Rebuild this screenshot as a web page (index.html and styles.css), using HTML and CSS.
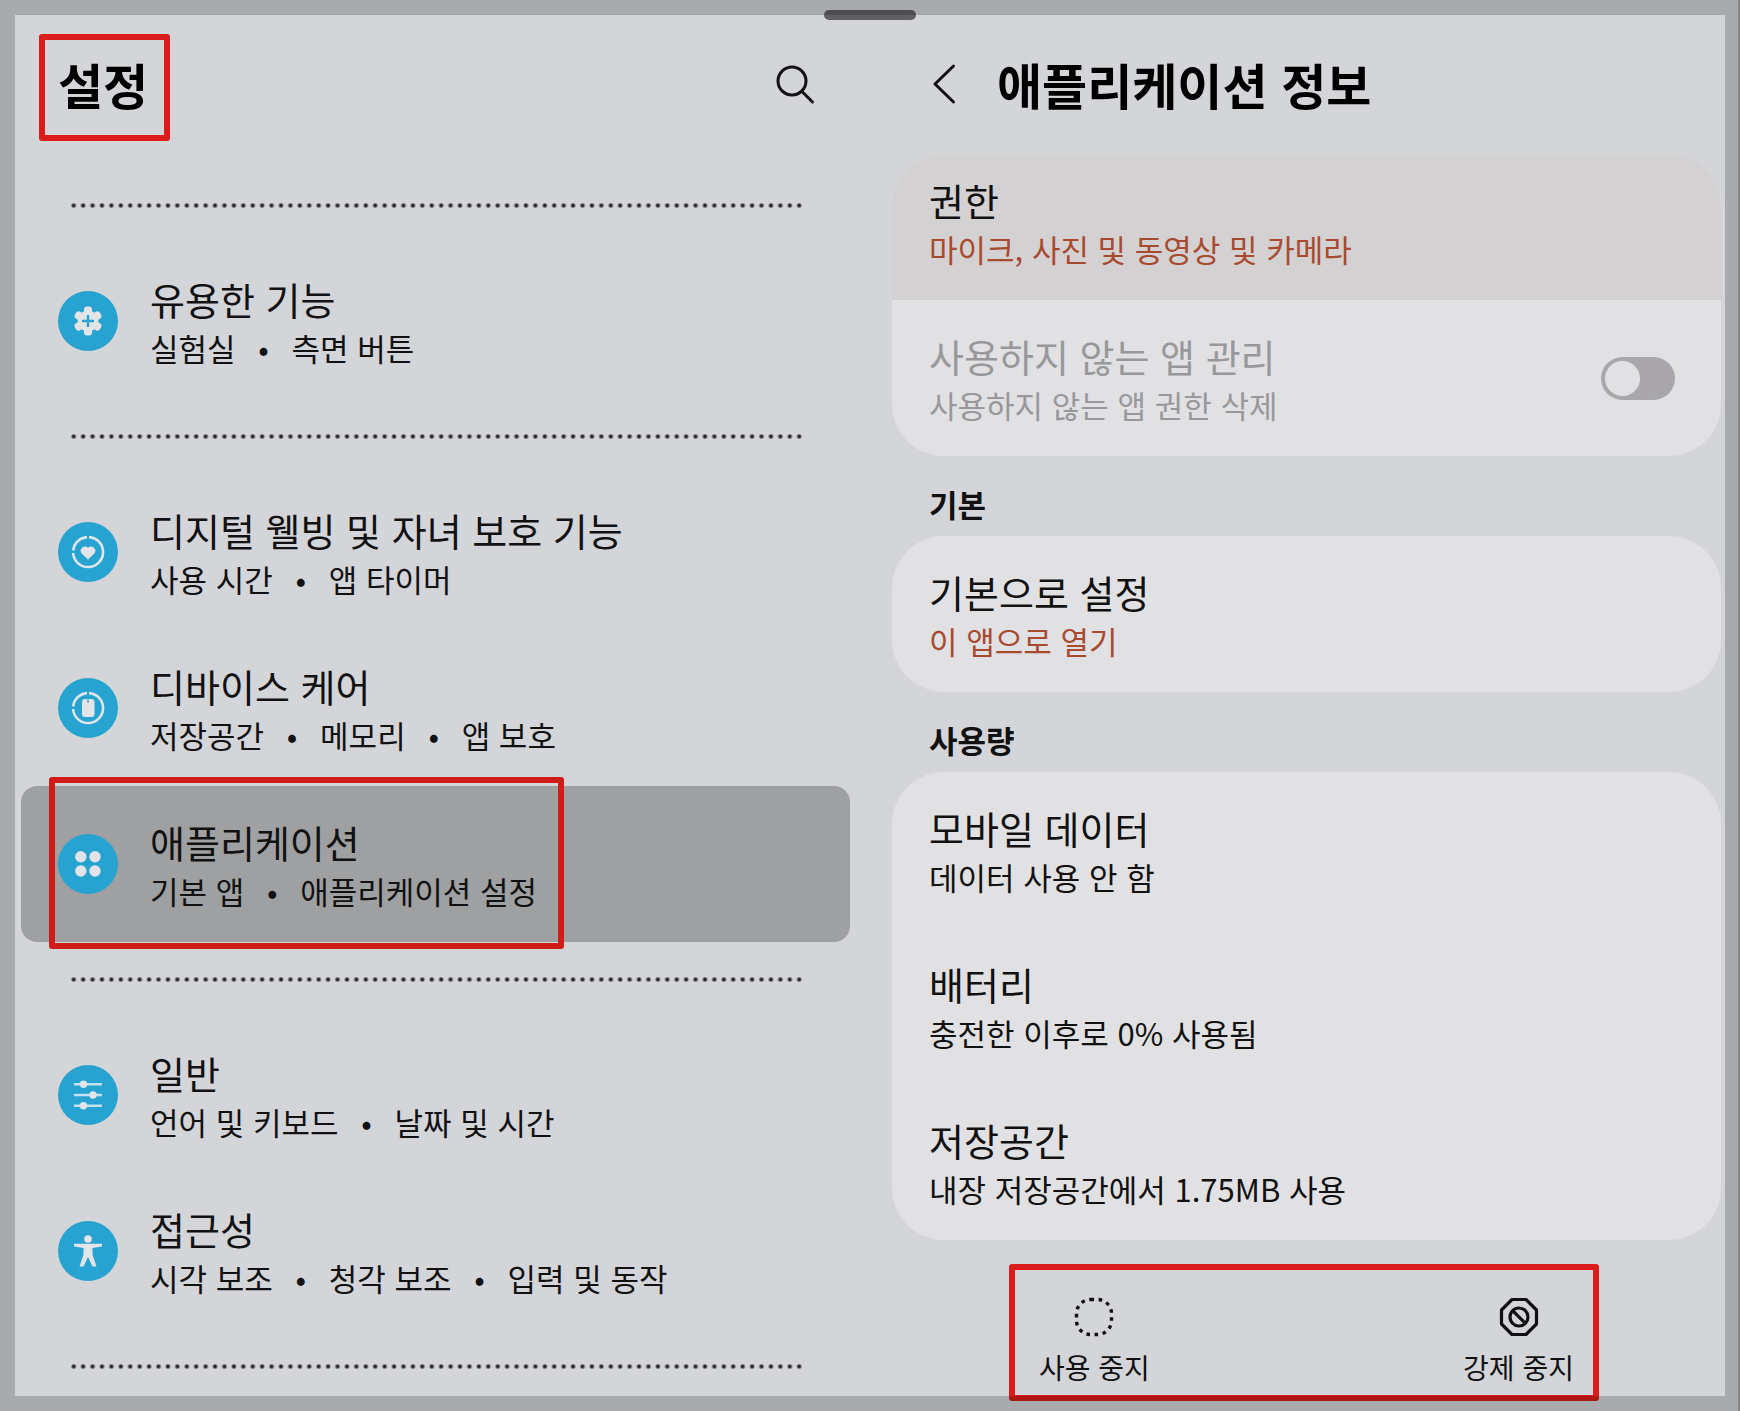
FILE: index.html
```html
<!DOCTYPE html>
<html lang="ko">
<head>
<meta charset="utf-8">
<meta name="viewport" content="width=device-width, initial-scale=1">
<title>설정</title>
<link rel="stylesheet" href="styles.css">
</head>
<body>
<div class="screen">
  <span class="handle"></span>

  <nav class="pane pane-list" aria-label="설정">
    <header class="bar">
      <h1 class="bar-title marked marked-title">설정</h1>
      <button class="icon-button" type="button" aria-label="검색">
        <svg width="40" height="40" viewBox="0 0 40 40" fill="none" stroke="#111" stroke-width="3" stroke-linecap="round"><circle cx="17" cy="17" r="14"/><path d="M27 27.500L37.500 38"/></svg>
      </button>
    </header>

    <hr class="dots">

    <a class="item" href="#features">
      <svg class="badge" viewBox="0 0 60 60"><circle cx="30" cy="30" r="30" fill="#26a3d0"/><g fill="#e3e4e7"><circle cx="30" cy="30" r="10.500"/><rect x="26" y="15.500" width="8" height="29" rx="3"/><rect x="26" y="15.500" width="8" height="29" rx="3" transform="rotate(60 30 30)"/><rect x="26" y="15.500" width="8" height="29" rx="3" transform="rotate(120 30 30)"/></g><path d="M30 24v12M24 30h12" stroke="#26a3d0" stroke-width="2.400"/></svg>
      <span class="item-text">
        <span class="label">유용한 기능</span>
        <span class="note">실험실<span class="sep">•</span>측면 버튼</span>
      </span>
    </a>

    <hr class="dots">

    <a class="item" href="#wellbeing">
      <svg class="badge" viewBox="0 0 60 60"><circle cx="30" cy="30" r="30" fill="#26a3d0"/><path d="M31 15.100A15 15 0 1 1 15.100 31M15.200 28.500A15 15 0 0 1 29 15.100" fill="none" stroke="#dfe6ea" stroke-width="2.600"/><path d="M30 37.500l-6.600-6.300a4.300 4.300 0 0 1 6.600-5.400a4.300 4.300 0 0 1 6.600 5.400z" fill="#e3e4e7"/></svg>
      <span class="item-text">
        <span class="label">디지털 웰빙 및 자녀 보호 기능</span>
        <span class="note">사용 시간<span class="sep">•</span>앱 타이머</span>
      </span>
    </a>

    <a class="item" href="#care">
      <svg class="badge" viewBox="0 0 60 60"><circle cx="30" cy="30" r="30" fill="#26a3d0"/><path d="M31 15.100A15 15 0 1 1 15.100 31M15.200 28.500A15 15 0 0 1 29 15.100" fill="none" stroke="#dfe6ea" stroke-width="2.600"/><rect x="24" y="21" width="12.500" height="18" rx="3" fill="#e3e4e7"/><path d="M30 21.500v3" stroke="#26a3d0" stroke-width="1.500"/></svg>
      <span class="item-text">
        <span class="label">디바이스 케어</span>
        <span class="note">저장공간<span class="sep">•</span>메모리<span class="sep">•</span>앱 보호</span>
      </span>
    </a>

    <a class="item item-current" href="#apps" aria-current="page">
      <svg class="badge" viewBox="0 0 60 60"><circle cx="30" cy="30" r="30" fill="#26a3d0"/><g fill="#e3e4e7"><circle cx="22.800" cy="22.800" r="5.700"/><circle cx="37" cy="22.800" r="5.700"/><circle cx="22.800" cy="37" r="5.700"/><circle cx="37" cy="37" r="5.700"/></g></svg>
      <span class="item-text">
        <span class="label">애플리케이션</span>
        <span class="note">기본 앱<span class="sep">•</span>애플리케이션 설정</span>
      </span>
      <span class="mark-apps"></span>
    </a>

    <hr class="dots">

    <a class="item" href="#general">
      <svg class="badge" viewBox="0 0 60 60"><circle cx="30" cy="30" r="30" fill="#26a3d0"/><path d="M16 19.200h28M16 30h28M16 40.800h28" stroke="#bfe3f0" stroke-width="2.400"/><g fill="#e3e4e7"><circle cx="25.500" cy="19.200" r="3.700"/><circle cx="35" cy="30" r="3.700"/><circle cx="25.500" cy="40.800" r="3.700"/></g></svg>
      <span class="item-text">
        <span class="label">일반</span>
        <span class="note">언어 및 키보드<span class="sep">•</span>날짜 및 시간</span>
      </span>
    </a>

    <a class="item" href="#accessibility">
      <svg class="badge" viewBox="0 0 60 60"><circle cx="30" cy="30" r="30" fill="#26a3d0"/><g fill="#e3e4e7"><circle cx="30" cy="18" r="3.800"/><path d="M16 22.800h28v2.700l-9.500 1.500v6.500L38.500 45.500h-4L30 36l-4.500 9.500h-4L25.500 33.500V27L16 25.500z"/></g></svg>
      <span class="item-text">
        <span class="label">접근성</span>
        <span class="note">시각 보조<span class="sep">•</span>청각 보조<span class="sep">•</span>입력 및 동작</span>
      </span>
    </a>

    <hr class="dots">
  </nav>

  <main class="pane pane-detail">
    <header class="bar bar-detail">
      <button class="icon-button" type="button" aria-label="뒤로">
        <svg width="24" height="40" viewBox="0 0 24 40" fill="none" stroke="#111" stroke-width="3" stroke-linecap="round" stroke-linejoin="round"><path d="M21.500 2L3 20L21.500 38"/></svg>
      </button>
      <h2 class="bar-title">애플리케이션 정보</h2>
    </header>

    <section class="card">
      <a class="row row-permission" href="#permissions">
        <span class="label">권한</span>
        <span class="note accent">마이크, 사진 및 동영상 및 카메라</span>
      </a>
      <div class="row row-switch">
        <label class="switch-text" for="unused">
          <span class="label">사용하지 않는 앱 관리</span>
          <span class="note">사용하지 않는 앱 권한 삭제</span>
        </label>
        <input class="switch" id="unused" type="checkbox" role="switch" disabled>
      </div>
    </section>

    <h3 class="group-title">기본</h3>
    <section class="card">
      <a class="row" href="#defaults">
        <span class="label">기본으로 설정</span>
        <span class="note accent">이 앱으로 열기</span>
      </a>
    </section>

    <h3 class="group-title">사용량</h3>
    <section class="card">
      <a class="row" href="#data">
        <span class="label">모바일 데이터</span>
        <span class="note">데이터 사용 안 함</span>
      </a>
      <a class="row" href="#battery">
        <span class="label">배터리</span>
        <span class="note">충전한 이후로 0% 사용됨</span>
      </a>
      <a class="row" href="#storage">
        <span class="label">저장공간</span>
        <span class="note">내장 저장공간에서 1.75MB 사용</span>
      </a>
    </section>

    <footer class="actions marked marked-actions">
      <button class="action" type="button">
        <svg width="40" height="40" viewBox="0 0 40 40" fill="none" stroke="#111" stroke-width="3.400"><rect x="2.500" y="2.500" width="35" height="35" rx="14" stroke-dasharray="3.600 4.550"/></svg>
        사용 중지
      </button>
      <button class="action" type="button">
        <svg width="40" height="40" viewBox="0 0 40 40" fill="none" stroke="#111" stroke-width="3.200" stroke-linejoin="round"><path d="M13 2.500h14L37.500 13v14L27 37.500H13L2.500 27V13z"/><circle cx="20" cy="20" r="9"/><path d="M13.600 13.600l12.800 12.800"/></svg>
        강제 중지
      </button>
    </footer>
  </main>
</div>
</body>
</html>
```

FILE: styles.css
```css
* {
  box-sizing: border-box;
}

body {
  margin: 0;
  background: #d4d5d9;
  color: #111;
  font-family: "Noto Sans CJK KR", "Noto Sans", sans-serif;
}

h1,
h2,
h3 {
  margin: 0;
}

a {
  color: inherit;
  text-decoration: none;
}

button {
  padding: 0;
  border: 0;
  background: none;
  color: inherit;
  font: inherit;
}

svg {
  display: block;
}

.screen {
  position: relative;
  display: grid;
  grid-template-columns: 1fr 1fr;
  min-height: 100vh;
  padding: 15px;
  background: linear-gradient(to left, #a9a9a8 2px, transparent 2px);
}

/* Shaded frame over the edges of the screen */
.screen::after {
  content: "";
  position: absolute;
  inset: 0;
  border: 15px solid rgba(0, 0, 0, 0.2);
  pointer-events: none;
}

.handle {
  position: absolute;
  top: 10px;
  left: 50%;
  width: 92px;
  height: 10px;
  margin-left: -46px;
  border-radius: 5px;
  background: #615f64;
}

.pane-list {
  padding: 0 20px 0 6px;
}

.pane-detail {
  padding: 0 4px 0 22px;
}

.bar {
  display: flex;
  align-items: center;
  justify-content: space-between;
  height: 153px;
  padding: 0 35px 16px 37px;
}

.bar-detail {
  justify-content: flex-start;
  gap: 41px;
  height: 139px;
  padding: 0 40px 2px;
}

.bar-title {
  color: #000;
  font-size: 49px;
  font-weight: 700;
  line-height: 72px;
}

/* Red call-out outlines */
.marked {
  position: relative;
}

.marked::after,
.mark-apps {
  content: "";
  position: absolute;
  border: 6px solid #da1c1a;
  border-radius: 3px;
  pointer-events: none;
}

.marked-title::after {
  inset: -14px -22px -21px -19px;
}

.marked-actions::after {
  inset: 24px 122px -12px 117px;
}

.mark-apps {
  top: -9px;
  bottom: -7px;
  left: 28px;
  width: 515px;
  border-color: #d01c16;
}

.dots {
  height: 75px;
  margin: 0 45px 0 48px;
  border: 0;
  background: radial-gradient(circle, #222 1px, transparent 3px) left top / calc(100% / 78) 75px repeat-x;
}

.dots:last-child {
  height: 67px;
}

.item {
  position: relative;
  display: flex;
  align-items: center;
  gap: 32px;
  height: 156px;
  padding: 0 37px;
}

.item-current {
  border-radius: 16px;
  background: #9fa0a1;
}

.badge {
  flex: none;
  width: 60px;
  height: 60px;
}

.item-text,
.row,
.switch-text {
  display: flex;
  flex-direction: column;
  padding-top: 2px;
}

.label {
  font-size: 38px;
  line-height: 52px;
}

.note {
  font-size: 31px;
  line-height: 46px;
}

.sep {
  display: inline-block;
  width: 56px;
  text-align: center;
}

.card {
  overflow: hidden;
  border-radius: 52px;
  background: #e1e1e3;
}

.row {
  justify-content: center;
  height: 156px;
  padding: 2px 37px 0;
}

.row-permission {
  height: 146px;
  padding-bottom: 10px;
  background: #d4d1d3;
}

.row-switch {
  flex-direction: row;
  align-items: center;
  justify-content: space-between;
  padding: 0 46px 0 37px;
  color: #98989b;
}

.accent {
  color: #a84a30;
}

.group-title {
  height: 80px;
  padding: 24px 37px 0;
  font-size: 31px;
  font-weight: 700;
  line-height: 48px;
}

.switch {
  appearance: none;
  display: flex;
  align-items: center;
  width: 74px;
  height: 43px;
  margin: 0;
  padding: 4px;
  border-radius: 22px;
  background: #a9a7aa;
}

.switch::before {
  content: "";
  width: 35px;
  height: 35px;
  border-radius: 50%;
  background: #e1e1e3;
}

.actions {
  display: flex;
  justify-content: space-between;
  padding: 57px 147px 0;
}

.action {
  display: flex;
  flex-direction: column;
  align-items: center;
  gap: 8px;
  font-size: 28px;
  line-height: 44px;
}
```
